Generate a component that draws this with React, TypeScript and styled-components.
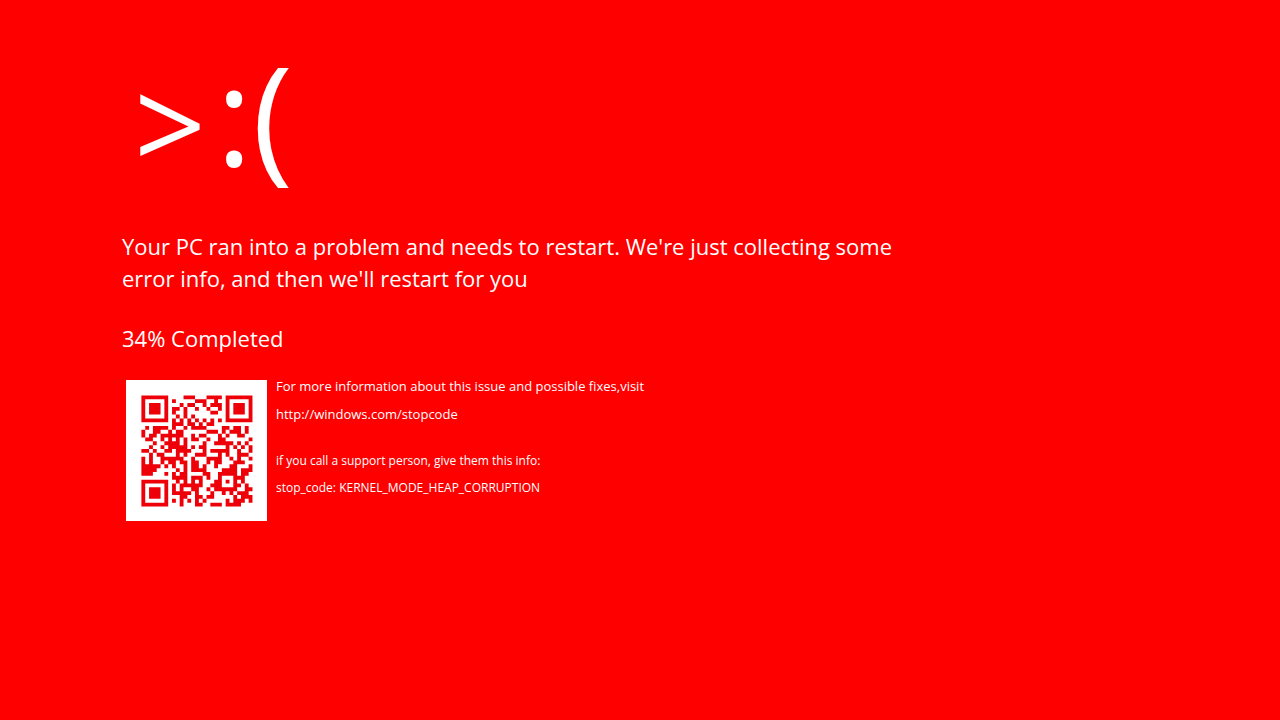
import React from 'react';
import styled, { createGlobalStyle } from 'styled-components';

const GlobalStyle = createGlobalStyle`
  * { box-sizing: border-box; }
  html, body { margin: 0; background: #ff0000; }
  body {
    font-family: 'Segoe UI', 'Open Sans', 'Noto Sans', sans-serif;
    color: #ffffff;
  }
`;

const Screen = styled.main`
  min-height: 100vh;
  padding: 48px 120px 48px 122px;
  background: #ff0000;
`;

const Face = styled.div`
  display: flex;
  align-items: flex-start;
  gap: 10px;
  min-height: 152px;
  padding-left: 12px;
`;

const Brow = styled.span`
  font-size: 126px;
  line-height: 148px;
`;

const Frown = styled.span`
  font-size: 138px;
  line-height: 128px;
`;

const Message = styled.h1`
  max-width: 800px;
  margin: 30px 0 0;
  font-size: 22px;
  font-weight: 400;
  line-height: 32px;
`;

const Progress = styled.p`
  margin: 28px 0 0;
  font-size: 22px;
  line-height: 32px;
`;

const Details = styled.section`
  display: flex;
  gap: 9px;
  margin-top: 26px;
  padding-left: 4px;
`;

const QrFrame = styled.svg`
  flex: none;
  width: 141px;
  height: 141px;
  background: #ffffff;
`;

const Info = styled.div`
  display: flex;
  flex-direction: column;
`;

const InfoLine = styled.p<{ $small?: boolean; $gap?: number }>`
  margin: ${(p) => p.$gap ?? 0}px 0 0;
  font-size: ${(p) => (p.$small ? 12 : 13)}px;
  line-height: 12px;
`;

const InfoLink = styled.a`
  color: inherit;
  text-decoration: none;
`;

const SIZE = 29;
const BLOCK_DATA = 17;
const BLOCK_ECC = 18;
const FORMAT_BITS = '010111011011010';

function gfMul(a: number, b: number): number {
  let r = 0;
  for (let i = 7; i >= 0; i--) {
    r = (r << 1) ^ ((r >>> 7) * 0x11d);
    r ^= ((b >>> i) & 1) * a;
  }
  return r;
}

function errorCorrection(data: number[]): number[] {
  const divisor: number[] = new Array(BLOCK_ECC).fill(0);
  divisor[BLOCK_ECC - 1] = 1;
  let root = 1;
  for (let i = 0; i < BLOCK_ECC; i++) {
    for (let j = 0; j < BLOCK_ECC; j++) {
      divisor[j] = gfMul(divisor[j], root);
      if (j + 1 < BLOCK_ECC) divisor[j] ^= divisor[j + 1];
    }
    root = gfMul(root, 2);
  }
  const rem: number[] = new Array(BLOCK_ECC).fill(0);
  for (const byte of data) {
    const factor = byte ^ (rem.shift() as number);
    rem.push(0);
    divisor.forEach((d, i) => {
      rem[i] ^= gfMul(d, factor);
    });
  }
  return rem;
}

/* Version 3 QR code, level Q, mask 6. */
function encodeQr(text: string): boolean[][] {
  let bits = '0100' + text.length.toString(2).padStart(8, '0');
  for (const ch of text) bits += ch.charCodeAt(0).toString(2).padStart(8, '0');
  bits += '0000';
  const data: number[] = [];
  for (let i = 0; i + 8 <= bits.length; i += 8) data.push(parseInt(bits.slice(i, i + 8), 2));
  for (let pad = 0xec; data.length < BLOCK_DATA * 2; pad ^= 0xec ^ 0x11) data.push(pad);

  const blocks = [data.slice(0, BLOCK_DATA), data.slice(BLOCK_DATA)];
  const eccs = blocks.map(errorCorrection);
  const stream: number[] = [];
  for (let i = 0; i < BLOCK_DATA; i++) blocks.forEach((b) => stream.push(b[i]));
  for (let i = 0; i < BLOCK_ECC; i++) eccs.forEach((b) => stream.push(b[i]));

  const grid: (boolean | null)[][] = Array.from({ length: SIZE }, () => new Array(SIZE).fill(null));
  const ring = (cy: number, cx: number, reach: number, light: number[]) => {
    for (let y = cy - reach; y <= cy + reach; y++)
      for (let x = cx - reach; x <= cx + reach; x++)
        if (y >= 0 && y < SIZE && x >= 0 && x < SIZE)
          grid[y][x] = !light.includes(Math.max(Math.abs(y - cy), Math.abs(x - cx)));
  };
  for (let i = 0; i < SIZE; i++) {
    grid[6][i] = i % 2 === 0;
    grid[i][6] = i % 2 === 0;
  }
  ring(3, 3, 4, [2, 4]);
  ring(3, SIZE - 4, 4, [2, 4]);
  ring(SIZE - 4, 3, 4, [2, 4]);
  ring(22, 22, 2, [1]);

  const format = [...FORMAT_BITS].map((b) => b === '1');
  [0, 1, 2, 3, 4, 5, 7, 8].forEach((x, i) => {
    grid[8][x] = format[i];
  });
  [7, 5, 4, 3, 2, 1, 0].forEach((y, i) => {
    grid[y][8] = format[8 + i];
  });
  for (let i = 0; i < 7; i++) grid[SIZE - 1 - i][8] = format[i];
  for (let i = 7; i < 15; i++) grid[8][SIZE - 15 + i] = format[i];
  grid[SIZE - 8][8] = true;

  let n = 0;
  for (let right = SIZE - 1; right >= 1; right -= 2) {
    if (right === 6) right = 5;
    const upward = ((right + 1) & 2) === 0;
    for (let step = 0; step < SIZE; step++) {
      for (const x of [right, right - 1]) {
        const y = upward ? SIZE - 1 - step : step;
        if (grid[y][x] !== null) continue;
        const bit = n < stream.length * 8 && ((stream[n >> 3] >> (7 - (n & 7))) & 1) === 1;
        const flip = (((x * y) % 2) + ((x * y) % 3)) % 2 === 0;
        grid[y][x] = bit !== flip;
        n++;
      }
    }
  }
  return grid as boolean[][];
}

const STOPCODE_URL = 'http://windows.com/stopcode';

const qrPath = encodeQr(STOPCODE_URL)
  .flatMap((row, y) => row.map((dark, x) => (dark ? `M${x} ${y}h1v1h-1z` : '')))
  .join('');

function QrCode() {
  return (
    <QrFrame viewBox="0 0 141 141" role="img" aria-label="QR code">
      <path d={qrPath} fill="#ee0008" transform="translate(15.4 15.4) scale(3.83)" />
    </QrFrame>
  );
}

export default function App() {
  return (
    <>
      <GlobalStyle />
      <Screen>
        <Face>
          <Brow>&gt;</Brow>
          <Frown>:(</Frown>
        </Face>
        <Message>
          Your PC ran into a problem and needs to restart. We're just collecting some error info,
          and then we'll restart for you
        </Message>
        <Progress>34% Completed</Progress>
        <Details>
          <QrCode />
          <Info>
            <InfoLine>For more information about this issue and possible fixes,visit</InfoLine>
            <InfoLine $gap={16}>
              <InfoLink href={STOPCODE_URL}>{STOPCODE_URL}</InfoLink>
            </InfoLine>
            <InfoLine $small $gap={35}>
              if you call a support person, give them this info:
            </InfoLine>
            <InfoLine $small $gap={15}>
              stop_code: KERNEL_MODE_HEAP_CORRUPTION
            </InfoLine>
          </Info>
        </Details>
      </Screen>
    </>
  );
}
